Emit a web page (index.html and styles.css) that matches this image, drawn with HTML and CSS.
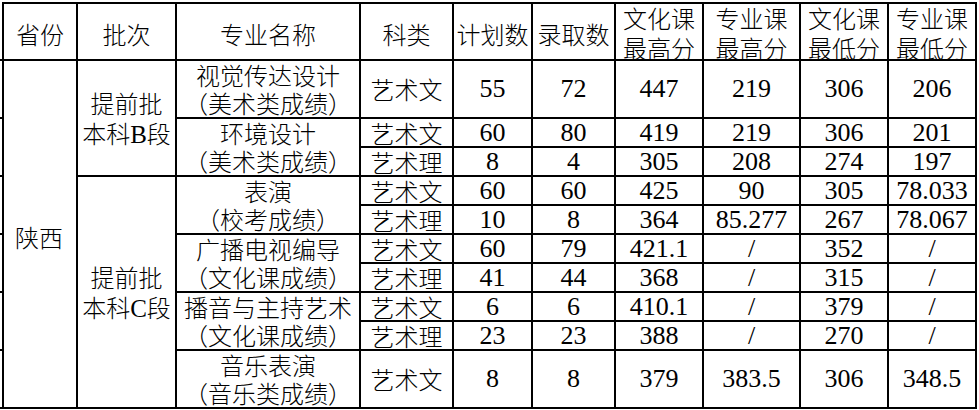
FILE: index.html
```html
<!DOCTYPE html>
<html lang="zh-CN">
<head>
<meta charset="utf-8">
<title>陕西 录取分数</title>
<link rel="stylesheet" href="styles.css">
</head>
<body>
<div class="page">
  <div class="stubs"></div>
  <div class="sheet">
    <div class="c hd">省份</div>
    <div class="c hd">批次</div>
    <div class="c hd">专业名称</div>
    <div class="c hd">科类</div>
    <div class="c hd">计划数</div>
    <div class="c hd">录取数</div>
    <div class="c hd two"><span class="t">文化课<br>最高分</span></div>
    <div class="c hd two"><span class="t">专业课<br>最高分</span></div>
    <div class="c hd two"><span class="t">文化课<br>最低分</span></div>
    <div class="c hd two"><span class="t">专业课<br>最低分</span></div>

    <div class="c r12 prov">陕西</div>
    <div class="c r4 batch"><span class="t">提前批<br>本科<span class="lat">B</span>段</span></div>
    <div class="c r2 major"><span class="t">视觉传达设计<br>（美术类成绩）</span></div>
    <div class="c r2">艺术文</div>
    <div class="c r2 n">55</div>
    <div class="c r2 n">72</div>
    <div class="c r2 n">447</div>
    <div class="c r2 n">219</div>
    <div class="c r2 n">306</div>
    <div class="c r2 n">206</div>

    <div class="c r2 major"><span class="t">环境设计<br>（美术类成绩）</span></div>
    <div class="c">艺术文</div>
    <div class="c n">60</div>
    <div class="c n">80</div>
    <div class="c n">419</div>
    <div class="c n">219</div>
    <div class="c n">306</div>
    <div class="c n">201</div>

    <div class="c">艺术理</div>
    <div class="c n">8</div>
    <div class="c n">4</div>
    <div class="c n">305</div>
    <div class="c n">208</div>
    <div class="c n">274</div>
    <div class="c n">197</div>

    <div class="c r8 batch batch-c"><span class="t">提前批<br>本科<span class="lat">C</span>段</span></div>
    <div class="c r2 major"><span class="t">表演<br>（校考成绩）</span></div>
    <div class="c">艺术文</div>
    <div class="c n">60</div>
    <div class="c n">60</div>
    <div class="c n">425</div>
    <div class="c n">90</div>
    <div class="c n">305</div>
    <div class="c n">78.033</div>

    <div class="c">艺术理</div>
    <div class="c n">10</div>
    <div class="c n">8</div>
    <div class="c n">364</div>
    <div class="c n">85.277</div>
    <div class="c n">267</div>
    <div class="c n">78.067</div>

    <div class="c r2 major"><span class="t">广播电视编导<br>（文化课成绩）</span></div>
    <div class="c">艺术文</div>
    <div class="c n">60</div>
    <div class="c n">79</div>
    <div class="c n">421.1</div>
    <div class="c n">/</div>
    <div class="c n">352</div>
    <div class="c n">/</div>

    <div class="c">艺术理</div>
    <div class="c n">41</div>
    <div class="c n">44</div>
    <div class="c n">368</div>
    <div class="c n">/</div>
    <div class="c n">315</div>
    <div class="c n">/</div>

    <div class="c r2 major"><span class="t">播音与主持艺术<br>（文化课成绩）</span></div>
    <div class="c">艺术文</div>
    <div class="c n">6</div>
    <div class="c n">6</div>
    <div class="c n">410.1</div>
    <div class="c n">/</div>
    <div class="c n">379</div>
    <div class="c n">/</div>

    <div class="c">艺术理</div>
    <div class="c n">23</div>
    <div class="c n">23</div>
    <div class="c n">388</div>
    <div class="c n">/</div>
    <div class="c n">270</div>
    <div class="c n">/</div>

    <div class="c r2 major"><span class="t">音乐表演<br>（音乐类成绩）</span></div>
    <div class="c r2">艺术文</div>
    <div class="c r2 n">8</div>
    <div class="c r2 n">8</div>
    <div class="c r2 n">379</div>
    <div class="c r2 n">383.5</div>
    <div class="c r2 n">306</div>
    <div class="c r2 n">348.5</div>
  </div>
</div>
</body>
</html>
```
FILE: styles.css
```css
html, body {
  margin: 0;
  padding: 0;
  background: #fff;
}

.page {
  display: flex;
  padding-top: 2px;
}

.stubs {
  width: 2px;
  height: 407px;
  background: repeating-linear-gradient(to bottom, transparent 0 56px, #000 56px 58px);
  background-position: 0 1px;
}

.sheet {
  display: grid;
  grid-template-columns: 72px 97px 182px 91px 77px 81px 86px 95px 86px 86px;
  grid-template-rows: 55px repeat(12, 27px);
  gap: 2px;
  padding: 2px;
  background: #000;
}

.c {
  background: #fff;
  display: flex;
  align-items: center;
  justify-content: center;
  text-align: center;
  color: #000;
  font-family: "Noto Sans CJK SC", "Noto Sans", sans-serif;
  font-weight: 300;
  font-size: 24px;
  line-height: 26px;
  white-space: nowrap;
}

.t {
  display: block;
}

.hd {
  padding-top: 5px;
}

.hd.two {
  line-height: 30px;
  padding-top: 3px;
}

.r2 { grid-row: span 2; }
.r4 { grid-row: span 4; }
.r8 { grid-row: span 8; }
.r12 { grid-row: span 12; }

.prov {
  padding-top: 6px;
  padding-right: 2px;
}

.batch {
  line-height: 30px;
  padding-top: 1px;
}

.batch-c {
  padding-top: 2px;
}

.major {
  line-height: 28px;
}

.n {
  font-family: "Liberation Serif", serif;
  font-weight: 400;
  font-size: 26px;
}

.lat {
  font-family: "Liberation Serif", serif;
  font-weight: 400;
  font-size: 25px;
}
```
